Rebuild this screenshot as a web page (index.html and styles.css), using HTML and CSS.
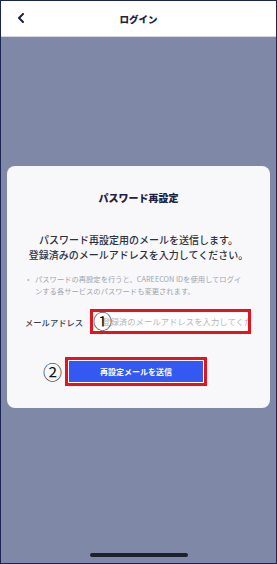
FILE: index.html
```html
<!DOCTYPE html>
<html lang="ja">
  <head>
    <meta charset="UTF-8" />
    <meta name="viewport" content="width=device-width, initial-scale=1.0" />
    <title>ログイン</title>
    <link rel="stylesheet" href="styles.css">
  </head>
  <body>
    <div class="screen">
      <header class="app-header">
        <svg class="back-icon" width="8" height="10" viewBox="0 0 8 10">
          <polyline points="6,1 2,5 6,9" fill="none" stroke="#1d2340" stroke-width="2" stroke-linecap="round" stroke-linejoin="round" />
        </svg>
        <h1 class="app-title">ログイン</h1>
      </header>
      <div class="overlay">
        <div class="dialog">
          <h2 class="dialog-title">パスワード再設定</h2>
          <p class="dialog-lead">パスワード再設定用のメールを送信します。<br>登録済みのメールアドレスを入力してください。</p>
          <ul class="dialog-notes">
            <li>パスワードの再設定を行うと、CAREECON IDを使用してログインする各サービスのパスワードも変更されます。</li>
          </ul>
          <div class="field-row">
            <label class="field-label" for="email">メールアドレス</label>
            <div class="field-box">
              <input id="email" class="field-input" type="email" placeholder="登録済のメールアドレスを入力してください" />
              <span class="mark mark-input">①</span>
            </div>
          </div>
          <div class="submit-row">
            <div class="submit-box">
              <span class="mark mark-button">②</span>
              <button class="submit-button">再設定メールを送信</button>
            </div>
          </div>
        </div>
        <div class="home-indicator"></div>
      </div>
    </div>
  </body>
</html>
```

FILE: styles.css
```css
* {
  box-sizing: border-box;
}
body {
  margin: 0;
  font-family: "Noto Sans CJK JP", "Noto Sans", sans-serif;
  background: #ffffff;
}
.screen {
  width: 277px;
  height: 564px;
  border: 1px solid #1b2553;
  display: flex;
  flex-direction: column;
  overflow: hidden;
}
.app-header {
  height: 36px;
  flex-shrink: 0;
  background: #ffffff;
  border-bottom: 1px solid #d6d8e0;
  display: flex;
  align-items: center;
  justify-content: center;
  position: relative;
}
.back-icon {
  position: absolute;
  left: 16px;
  top: 12px;
}
.app-title {
  margin: 0;
  font-size: 9.5px;
  font-weight: 900;
  color: #1d2340;
}
.overlay {
  flex: 1;
  background: #8088a8;
  display: flex;
  flex-direction: column;
  padding: 129px 6px 6px;
}
.dialog {
  background: #f8f8fa;
  border-radius: 8px;
  padding: 25px 0 20px;
  height: 242px;
}
.dialog-title {
  margin: 0;
  text-align: center;
  font-size: 10px;
  line-height: 14px;
  font-weight: 900;
  color: #1d2340;
}
.dialog-lead {
  margin: 27px 0 0;
  text-align: center;
  font-size: 10px;
  line-height: 15px;
  font-weight: 500;
  color: #2e3140;
}
.dialog-notes {
  margin: 11px 0 0;
  padding: 0 24px 0 28px;
  list-style: none;
  font-size: 7.3px;
  line-height: 12px;
  color: #a0a3ad;
}
.dialog-notes li {
  position: relative;
}
.dialog-notes li::before {
  content: "•";
  position: absolute;
  left: -8px;
  color: #b5b7bf;
}
.field-row {
  margin-top: 12px;
  display: flex;
  align-items: center;
  padding-left: 18px;
  gap: 7px;
}
.field-label {
  font-size: 8.3px;
  font-weight: 500;
  color: #3a3d4a;
  white-space: nowrap;
}
.field-box {
  position: relative;
  width: 161px;
  height: 25px;
  border: 3px solid #e4141f;
  background: #ffffff;
}
.field-input {
  display: block;
  width: 100%;
  height: 19px;
  border: none;
  outline: none;
  padding: 0 0 0 9px;
  font-family: inherit;
  font-size: 8.4px;
  line-height: 19px;
  background: transparent;
}
.field-input::placeholder {
  color: #b3b5bd;
}
.mark {
  position: absolute;
  font-size: 19px;
  line-height: 20px;
  color: #111111;
  font-family: "Noto Sans CJK JP", sans-serif;
}
.mark-input {
  left: 0px;
  top: -1px;
}
.submit-row {
  margin-top: 23px;
  display: flex;
  justify-content: center;
  padding-right: 5px;
}
.submit-box {
  position: relative;
  border: 3px solid #e4141f;
  padding: 1px;
  background: #ffffff;
}
.mark-button {
  left: -25px;
  top: 2px;
}
.submit-button {
  display: block;
  width: 134px;
  height: 21px;
  border: none;
  background: #3459f2;
  color: #ffffff;
  font-family: inherit;
  font-size: 8px;
  font-weight: 700;
  cursor: pointer;
}
.home-indicator {
  margin: auto auto 0;
  width: 98px;
  height: 4px;
  border-radius: 2px;
  background: #1e2129;
}
```
